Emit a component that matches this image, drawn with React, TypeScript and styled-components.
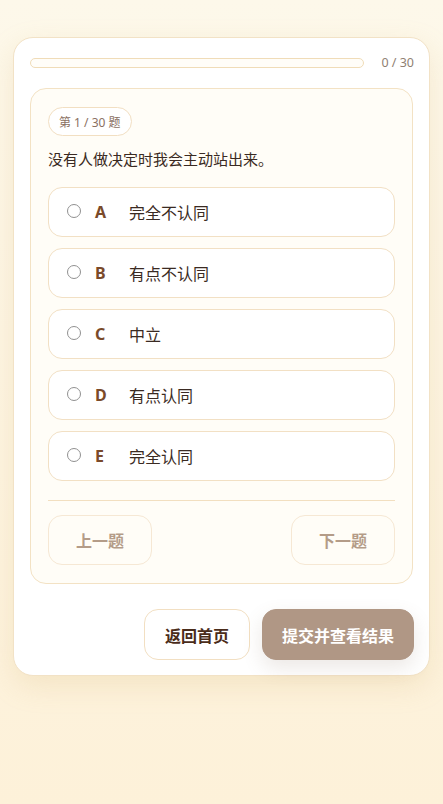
import React from 'react';
import styled, { createGlobalStyle } from 'styled-components';

const GlobalStyle = createGlobalStyle`
  html, body {
    margin: 0;
    padding: 0;
  }
  body {
    min-height: 804px;
    background: linear-gradient(180deg, #fdf8ea 0%, #fdf1d9 100%);
    font-family: 'Noto Sans', 'Noto Sans CJK SC', sans-serif;
  }
`;

const Page = styled.div`
  padding: 37px 13px 40px 13px;
`;

const Card = styled.div`
  background: #ffffff;
  border: 1px solid #f2e2c6;
  border-radius: 20px;
  padding: 19px 15px 15px 16px;
  box-shadow: 0 10px 28px rgba(214, 180, 120, 0.22);
  display: flex;
  flex-direction: column;
`;

const ProgressRow = styled.div`
  display: flex;
  align-items: center;
  gap: 17px;
  height: 11px;
`;

const Track = styled.div`
  flex: 1;
  height: 8px;
  border: 1px solid #f0dcb8;
  border-radius: 999px;
  background: #fffdf8;
`;

const Fill = styled.div`
  height: 100%;
  border-radius: 999px;
  background: #b09785;
`;

const Count = styled.span`
  font-size: 12.5px;
  color: #8f7f73;
  white-space: nowrap;
`;

const Panel = styled.div`
  margin-top: 20px;
  margin-right: 1px;
  background: #fffdf7;
  border: 1px solid #f3e2c4;
  border-radius: 16px;
  padding: 18px 17px 18px 17px;
  display: flex;
  flex-direction: column;
`;

const Badge = styled.span`
  align-self: flex-start;
  height: 27px;
  display: inline-flex;
  align-items: center;
  padding: 0 10px;
  border: 1px solid #f2dfc2;
  border-radius: 999px;
  font-size: 12px;
  color: #8a7062;
  background: #ffffff;
`;

const Question = styled.p`
  margin: 12px 0 0 0;
  font-size: 15px;
  line-height: 22px;
  color: #3a2a22;
`;

const Options = styled.div`
  margin-top: 17px;
  display: flex;
  flex-direction: column;
  gap: 11px;
`;

const Option = styled.label`
  height: 48px;
  display: flex;
  align-items: center;
  border: 1px solid #f2e0c4;
  border-radius: 14px;
  background: #ffffff;
  padding: 0 18px;
  cursor: pointer;
`;

const Radio = styled.input`
  margin: 0 0 3px 0;
  width: 14px;
  height: 14px;
  accent-color: #b09785;
  opacity: 0.8;
`;

const Letter = styled.span`
  margin-left: 14px;
  width: 34px;
  font-size: 16px;
  font-weight: 700;
  color: #7a4a2a;
`;

const OptionText = styled.span`
  font-size: 16px;
  color: #3a2a22;
`;

const Divider = styled.hr`
  margin: 19px 0 0 0;
  border: none;
  border-top: 1px solid #f2dfc0;
`;

const NavRow = styled.div`
  margin-top: 14px;
  display: flex;
  justify-content: space-between;
`;

const NavButton = styled.button`
  width: 104px;
  height: 50px;
  border: 1px solid #f6e8d4;
  border-radius: 14px;
  background: #fffdf7;
  font-family: inherit;
  font-size: 16px;
  font-weight: 700;
  color: #b49c88;
`;

const ActionRow = styled.div`
  margin-top: 25px;
  display: flex;
  justify-content: flex-end;
  gap: 12px;
`;

const ActionButton = styled.button<{ $primary?: boolean }>`
  height: 51px;
  padding: 0 ${(p) => (p.$primary ? '19px' : '20px')};
  border-radius: 14px;
  font-family: inherit;
  font-size: 16px;
  font-weight: 700;
  border: 1px solid ${(p) => (p.$primary ? '#b09785' : '#f2dfc2')};
  background: ${(p) => (p.$primary ? '#b09785' : '#ffffff')};
  color: ${(p) => (p.$primary ? '#ffffff' : '#4a2c1a')};
  box-shadow: ${(p) => (p.$primary ? '0 8px 20px rgba(120, 90, 70, 0.14)' : 'none')};
`;

const choices = [
  { key: 'A', text: '完全不认同' },
  { key: 'B', text: '有点不认同' },
  { key: 'C', text: '中立' },
  { key: 'D', text: '有点认同' },
  { key: 'E', text: '完全认同' },
];

export default function App() {
  const answered = 0;
  const total = 30;
  return (
    <>
      <GlobalStyle />
      <Page>
        <Card>
          <ProgressRow>
            <Track>
              <Fill style={{ width: `${(answered / total) * 100}%` }} />
            </Track>
            <Count>
              {answered} / {total}
            </Count>
          </ProgressRow>
          <Panel>
            <Badge>第 1 / 30 题</Badge>
            <Question>没有人做决定时我会主动站出来。</Question>
            <Options>
              {choices.map((c) => (
                <Option key={c.key}>
                  <Radio type="radio" name="q1" value={c.key} />
                  <Letter>{c.key}</Letter>
                  <OptionText>{c.text}</OptionText>
                </Option>
              ))}
            </Options>
            <Divider />
            <NavRow>
              <NavButton>上一题</NavButton>
              <NavButton>下一题</NavButton>
            </NavRow>
          </Panel>
          <ActionRow>
            <ActionButton>返回首页</ActionButton>
            <ActionButton $primary>提交并查看结果</ActionButton>
          </ActionRow>
        </Card>
      </Page>
    </>
  );
}
